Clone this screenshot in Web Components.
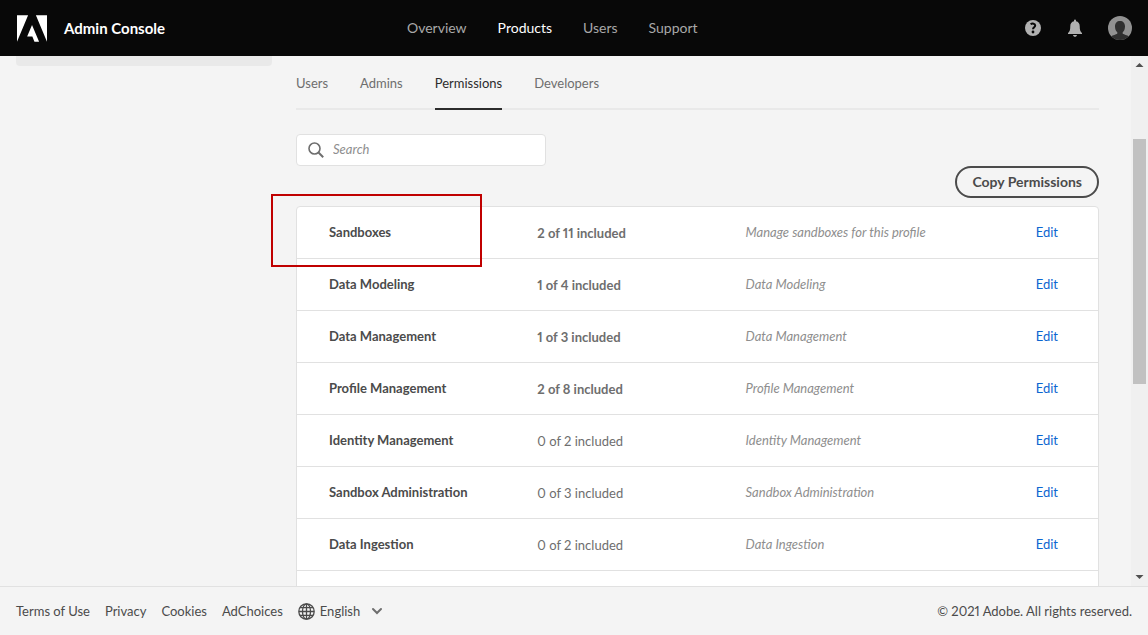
<!DOCTYPE html>
<html lang="en">
<head>
<meta charset="utf-8">
<meta name="viewport" content="width=device-width, initial-scale=1">
<title>Admin Console</title>
<style>
  :root {
    --text-s: 13px;
    --text-m: 14px;
    --line: #e1e1e1;
    --page: #f4f4f4;
    --ink: #4b4b4b;
    --ink-soft: #6e6e6e;
    --ink-faint: #8e8e8e;
    --ink-strong: #2c2c2c;
    --link: #0d66d0;
  }
  body {
    margin: 0;
    background: var(--page);
    color: var(--ink);
    font: 13px/20px Lato, "Noto Sans", sans-serif;
    font-variant-numeric: proportional-nums;
  }
</style>
</head>
<body>
<app-shell>
  <app-header slot="header" name="Admin Console">
    <nav-link href="#overview">Overview</nav-link>
    <nav-link href="#products" current>Products</nav-link>
    <nav-link href="#users">Users</nav-link>
    <nav-link href="#support">Support</nav-link>
  </app-header>
  <side-card slot="side"></side-card>
  <tab-bar>
    <tab-item>Users</tab-item>
    <tab-item>Admins</tab-item>
    <tab-item selected>Permissions</tab-item>
    <tab-item>Developers</tab-item>
  </tab-bar>
  <search-field></search-field>
  <pill-button>Copy Permissions</pill-button>
  <permission-table></permission-table>
  <app-footer slot="footer">
    <footer-link href="#terms">Terms of Use</footer-link>
    <footer-link href="#privacy">Privacy</footer-link>
    <footer-link href="#cookies">Cookies</footer-link>
    <footer-link href="#adchoices">AdChoices</footer-link>
    <language-picker></language-picker>
    <span slot="legal">© 2021 Adobe. All rights reserved.</span>
  </app-footer>
</app-shell>

<script>
  const define = (name, render) => customElements.define(name, class extends HTMLElement {
    constructor() {
      super();
      this.attachShadow({ mode: 'open' });
    }
    connectedCallback() {
      this.shadowRoot.innerHTML = render(this);
    }
  });

  define('app-shell', () => `
    <style>
      :host { display: grid; grid-template-rows: auto minmax(0, 1fr) auto; height: 100vh; }
      .body { display: grid; grid-template-columns: minmax(0, 1fr) auto; min-height: 0; }
      .view { overflow: hidden; display: grid; grid-template-columns: 256px minmax(0, 1fr);
        gap: 24px; padding: 0 32px 0 16px; align-items: start; }
      main { display: flex; flex-direction: column; min-width: 0; }
    </style>
    <slot name="header"></slot>
    <div class="body">
      <div class="view">
        <slot name="side"></slot>
        <main><slot></slot></main>
      </div>
      <scroll-rail></scroll-rail>
    </div>
    <slot name="footer"></slot>`);

  define('app-header', el => `
    <style>
      :host { display: block; background: #080808; color: #fff; }
      header { display: grid; grid-template-columns: 391px minmax(0, 1fr) auto; align-items: center;
        height: 56px; padding: 0 16px; }
      .brand { display: flex; align-items: center; gap: 17px; color: inherit; text-decoration: none;
        font-size: 15px; font-weight: 700; }
      .brand svg { margin-left: 1px; }
      nav { display: flex; gap: 31px; }
      .tools { display: flex; align-items: center; gap: 24px; }
      button { display: grid; place-items: center; width: 18px; height: 32px; padding: 0;
        border: 0; background: none; color: #b1b1b1; }
      .avatar { width: 24px; }
    </style>
    <header>
      <a class="brand" href="#home">
        <svg width="30" height="27" viewBox="0 1.376 24 21.248" fill="#fff" aria-hidden="true">
          <path d="M13.966 22.624l-1.69-4.281H8.122l3.892-9.144 5.662 13.425zM8.884 1.376H0v21.248zm15.116 0h-8.884L24 22.624z"/>
        </svg>
        <span>${el.getAttribute('name')}</span>
      </a>
      <nav aria-label="Main"><slot></slot></nav>
      <div class="tools">
        <button aria-label="Help">
          <svg width="16" height="16" viewBox="0 0 16 16" aria-hidden="true">
            <circle cx="8" cy="8" r="8" fill="currentColor"/>
            <path d="M5.6 4.3c1.6-1.2 4.6-.9 4.6 1.2 0 1.7-2.2 1.9-2.2 3.8" fill="none" stroke="#080808" stroke-width="2"/>
            <circle cx="8" cy="12" r="1.4" fill="#080808"/>
          </svg>
        </button>
        <button aria-label="Notifications">
          <svg width="14" height="18" viewBox="0 0 14 18" fill="currentColor" aria-hidden="true">
            <path d="M6 1.5a1 1 0 0 1 2 0v.8c2.400.5 3.700 2.300 3.700 4.600 0 4.300.8 6 2.300 7v1.100H0v-1.100c1.500-1 2.300-2.700 2.300-7C2.300 4.600 3.600 2.800 6 2.300zM5 16h4c-.2 1.200-1 1.800-2 1.800S5.200 17.200 5 16z"/>
          </svg>
        </button>
        <button class="avatar" aria-label="Account">
          <svg width="24" height="24" viewBox="0 0 24 24" aria-hidden="true">
            <clipPath id="round"><circle cx="12" cy="12" r="12"/></clipPath>
            <g clip-path="url(#round)">
              <path d="M0 0h24v24H0z" fill="#919191"/>
              <path d="M7 10.500C7 7 9 5 12 5s5 2 5 5.500c0 2.600-.9 4.700-2.300 5.800v1.500c1.500.9 4.300 1.200 6.300 2.700V24H3v-3.500c2-1.500 4.800-1.800 6.300-2.700v-1.500C7.900 15.200 7 13.100 7 10.500z" fill="#303030"/>
            </g>
          </svg>
        </button>
      </div>
    </header>`);

  define('nav-link', el => `
    <style>
      :host { display: block; }
      a { color: #a8a8a8; text-decoration: none; font-size: var(--text-m); }
      a[aria-current] { color: #fff; }
    </style>
    <a href="${el.getAttribute('href')}" ${el.hasAttribute('current') ? 'aria-current="page"' : ''}><slot></slot></a>`);

  define('side-card', () => `
    <style>
      :host { display: block; height: 10px; background: #e9e9e9; border-radius: 0 0 4px 4px; }
    </style>`);

  define('tab-bar', () => `
    <style>
      :host { display: block; margin-bottom: 24px; }
      div { display: flex; gap: 32px; border-bottom: 2px solid #e9e9e9; }
    </style>
    <div role="tablist"><slot></slot></div>`);

  define('tab-item', el => `
    <style>
      :host { display: block; margin-bottom: -2px; }
      button { display: block; height: 54px; padding: 2px 0 0; border: 0; border-bottom: 2px solid transparent;
        background: none; color: var(--ink-soft); font: inherit; }
      button[aria-selected="true"] { color: var(--ink-strong); border-color: var(--ink-strong); }
    </style>
    <button role="tab" aria-selected="${el.hasAttribute('selected')}"><slot></slot></button>`);

  define('search-field', () => `
    <style>
      :host { display: block; width: 250px; }
      label { display: flex; align-items: center; gap: 9px; height: 32px; padding: 0 11px; box-sizing: border-box;
        border: 1px solid var(--line); border-radius: 4px; background: #fff; }
      svg { flex: none; }
      input { flex: 1; min-width: 0; padding: 0 0 2px; border: 0; outline: 0; background: none;
        color: var(--ink); font: inherit; line-height: 20px; }
      input::placeholder { color: var(--ink-faint); font-style: italic; }
    </style>
    <label>
      <svg width="16" height="16" viewBox="0 0 16 16" fill="none" stroke="#6e6e6e" aria-hidden="true">
        <circle cx="6.5" cy="6.5" r="5.5" stroke-width="1.6"/>
        <path d="M10.500 10.500l4.700 4.700" stroke-width="2"/>
      </svg>
      <input type="search" placeholder="Search" aria-label="Search">
    </label>`);

  define('pill-button', () => `
    <style>
      :host { display: block; align-self: flex-end; margin-bottom: 8px; }
      button { display: block; height: 32px; padding: 0 15px; border: 2px solid var(--ink); border-radius: 16px;
        background: none; color: var(--ink); font: inherit; font-size: var(--text-m); font-weight: 700; }
    </style>
    <button type="button"><slot></slot></button>`);

  const permissions = [
    { name: 'Sandboxes', used: 2, total: 11, note: 'Manage sandboxes for this profile' },
    { name: 'Data Modeling', used: 1, total: 4 },
    { name: 'Data Management', used: 1, total: 3 },
    { name: 'Profile Management', used: 2, total: 8 },
    { name: 'Identity Management', used: 0, total: 2 },
    { name: 'Sandbox Administration', used: 0, total: 3 },
    { name: 'Data Ingestion', used: 0, total: 2 },
  ];

  define('permission-table', () => `
    <style>
      :host { display: block; position: relative; border: 1px solid var(--line); border-radius: 4px; background: #fff; }
      table { width: 100%; table-layout: fixed; border-collapse: separate; border-spacing: 0; }
      .name { width: 30%; }
      .count { width: 26%; }
      .note { width: 36%; }
      tr { height: 52px; }
      th, td { box-sizing: border-box; padding: 0 0 2px; border-bottom: 1px solid var(--line); text-align: left; font-size: var(--text-s); }
      th { padding-left: 32px; font-weight: 700; }
      td.count { padding-top: 2px; color: var(--ink-soft); }
      .some { font-weight: 700; }
      td.note { color: var(--ink-faint); font-style: italic; }
      td.action { padding-right: 40px; text-align: right; }
      a { color: var(--link); text-decoration: none; }
      .rest { height: 52px; }
      .marker { position: absolute; left: -26px; top: -13px; width: 211px; height: 73px; box-sizing: border-box;
        border: 2px solid #c00000; pointer-events: none; }
    </style>
    <table aria-label="Permissions">
      <colgroup><col class="name"><col class="count"><col class="note"><col></colgroup>
      <tbody>${permissions.map(p => `
        <tr>
          <th scope="row">${p.name}</th>
          <td class="count ${p.used ? 'some' : ''}">${p.used} of ${p.total} included</td>
          <td class="note">${p.note || p.name}</td>
          <td class="action"><a href="#edit" aria-label="Edit ${p.name}">Edit</a></td>
        </tr>`).join('')}
      </tbody>
    </table>
    <div class="rest"></div>
    <div class="marker"></div>`);

  define('scroll-rail', () => `
    <style>
      :host { display: flex; flex-direction: column; width: 17px; background: #f0f0f0; }
      svg { flex: none; }
      .before { flex: 66; }
      .thumb { flex: 245; margin: 0 2px; background: #c1c1c1; }
      .after { flex: 185; }
    </style>
    <svg width="17" height="17" viewBox="0 0 17 17" aria-hidden="true"><path d="M4.500 11l4-4 4 4z" fill="#505050"/></svg>
    <div class="before"></div><div class="thumb"></div><div class="after"></div>
    <svg width="17" height="17" viewBox="0 0 17 17" aria-hidden="true"><path d="M4.500 6l4 4 4-4z" fill="#505050"/></svg>`);

  define('app-footer', () => `
    <style>
      :host { display: block; border-top: 1px solid var(--line); background: var(--page); }
      footer { display: flex; justify-content: space-between; align-items: center; height: 48px; padding: 0 16px; }
      nav { display: flex; align-items: center; gap: 15px; }
    </style>
    <footer>
      <nav aria-label="Legal"><slot></slot></nav>
      <slot name="legal"></slot>
    </footer>`);

  define('footer-link', el => `
    <style>
      :host { display: block; }
      a { color: inherit; text-decoration: none; }
    </style>
    <a href="${el.getAttribute('href')}"><slot></slot></a>`);

  define('language-picker', () => `
    <style>
      :host { display: block; }
      label { display: flex; align-items: center; gap: 5px; }
      select { appearance: none; padding: 0; border: 0; background: none; color: inherit; font: inherit; }
      .chevron { margin-left: 5px; }
    </style>
    <label>
      <svg width="17" height="17" viewBox="0 0 17 17" fill="none" stroke="#4b4b4b" stroke-width="1.3" aria-hidden="true">
        <circle cx="8.5" cy="8.5" r="7.7"/>
        <ellipse cx="8.5" cy="8.5" rx="4" ry="7.7"/>
        <path d="M8.500 1v15M1 8.500h15M2 4.700h13M2 12.300h13"/>
      </svg>
      <select aria-label="Language"><option>English</option></select>
      <svg class="chevron" width="12" height="8" viewBox="0 0 12 8" fill="none" stroke="#6e6e6e" stroke-width="2" stroke-linecap="round" aria-hidden="true">
        <path d="M2 2l4 4 4-4"/>
      </svg>
    </label>`);
</script>
</body>
</html>
